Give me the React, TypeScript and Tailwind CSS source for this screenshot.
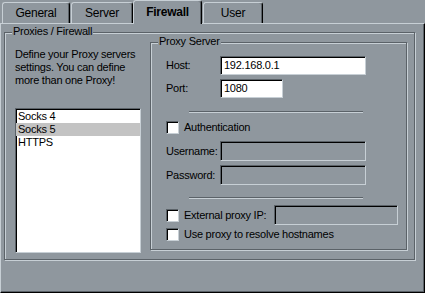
import React from 'react';

const sunken =
  'border border-t-[#5b6268] border-l-[#5b6268] border-b-[#c7cfd5] border-r-[#c7cfd5] shadow-[inset_1px_1px_0_#000]';
const etched = 'border border-[#5b6268] shadow-[inset_1px_1px_0_#c7cfd5,1px_1px_0_#c7cfd5]';

function Tab({ label, active, className }: { label: string; active?: boolean; className?: string }) {
  if (active) {
    return (
      <div
        className={`relative z-10 -mb-px flex h-[24px] items-center justify-center rounded-t-[3px] border-t border-l border-r border-t-[#c7cfd5] border-l-[#c7cfd5] border-r-black bg-[#8f979e] pb-[2px] text-[12px] font-bold shadow-[inset_-1px_0_0_#5b6268] ${className ?? ''}`}
      >
        {label}
      </div>
    );
  }
  return (
    <div
      className={`flex h-[21px] items-center justify-center rounded-t-[3px] border-t border-l border-r border-t-[#c7cfd5] border-l-[#c7cfd5] border-r-black text-[12px] shadow-[inset_-1px_0_0_#5b6268] ${className ?? ''}`}
    >
      {label}
    </div>
  );
}

function Group({ label, className, children }: { label: string; className?: string; children: React.ReactNode }) {
  return (
    <div className={`relative ${etched} ${className ?? ''}`}>
      <span className="absolute -top-[8px] left-[7px] bg-[#8f979e] px-[1px] leading-[13px]">{label}</span>
      {children}
    </div>
  );
}

function Check({ label }: { label: string }) {
  return (
    <div className="flex h-[13px] items-center">
      <div className={`h-[13px] w-[13px] shrink-0 bg-white ${sunken}`} />
      <span className="ml-[5px] whitespace-nowrap leading-[13px]">{label}</span>
    </div>
  );
}

function Field({ value, disabled, w }: { value?: string; disabled?: boolean; w: string }) {
  return (
    <div className={`flex h-full items-center pl-[3px] ${w} ${disabled ? 'bg-[#8f979e]' : 'bg-white'} ${sunken}`}>
      {value}
    </div>
  );
}

function Separator() {
  return <div className="ml-[38px] h-[2px] w-[174px] border-t border-b border-t-[#5b6268] border-b-[#c7cfd5]" />;
}

export default function App() {
  const proxies = ['Socks 4', 'Socks 5', 'HTTPS'];
  return (
    <div className="flex h-[293px] w-[425px] flex-col bg-[#8f979e] font-['Liberation_Sans',Arial,sans-serif] text-[11px] tracking-[-0.25px] text-black">
      {/* Tabs */}
      <div className="flex h-[23px] items-end pl-[2px]">
        <Tab label="General" className="w-[68px]" />
        <Tab label="Server" className="ml-[1px] w-[62px]" />
        <Tab label="Firewall" active className="w-[69px]" />
        <Tab label="User" className="ml-[1px] w-[60px]" />
      </div>

      {/* Page */}
      <div className="flex-1 border-t border-l border-r border-b border-t-[#c7cfd5] border-l-[#c7cfd5] border-r-black border-b-black pt-[8px] pl-[3px] shadow-[inset_-1px_-1px_0_#5b6268]">
        <Group label="Proxies / Firewall" className="flex h-[228px] w-[411px] pt-[9px] pr-[7px] pl-[10px]">
          <div className="flex w-[126px] flex-col">
            <p className="mt-[6px] leading-[13px]">
              Define your Proxy servers settings. You can define more than one Proxy!
            </p>
            <div className={`mt-[21px] h-[145px] bg-white py-[1px] ${sunken}`}>
              {proxies.map((p) => (
                <div key={p} className={`h-[13px] pl-[2px] leading-[13px] ${p === 'Socks 5' ? 'bg-[#c3c3c3]' : ''}`}>
                  {p}
                </div>
              ))}
            </div>
          </div>

          <Group label="Proxy Server" className="ml-[9px] flex h-[208px] w-[257px] flex-col pl-[15px]">
            <div className="mt-[13px] flex h-[19px] items-center">
              <span className="w-[54px]">Host:</span>
              <Field value="192.168.0.1" w="w-[146px]" />
            </div>
            <div className="mt-[4px] flex h-[19px] items-center">
              <span className="w-[54px]">Port:</span>
              <Field value="1080" w="w-[63px]" />
            </div>
            <div className="-ml-[15px] mt-[13px]">
              <Separator />
            </div>
            <div className="mt-[8px]">
              <Check label="Authentication" />
            </div>
            <div className="mt-[7px] flex h-[20px] items-center">
              <span className="w-[54px]">Username:</span>
              <Field disabled w="w-[146px]" />
            </div>
            <div className="mt-[4px] flex h-[20px] items-center">
              <span className="w-[54px]">Password:</span>
              <Field disabled w="w-[146px]" />
            </div>
            <div className="-ml-[15px] mt-[12px]">
              <Separator />
            </div>
            <div className="mt-[6px] flex h-[20px] items-center">
              <div className="w-[108px]">
                <Check label="External proxy IP:" />
              </div>
              <Field disabled w="w-[124px]" />
            </div>
            <div className="mt-[3px]">
              <Check label="Use proxy to resolve hostnames" />
            </div>
          </Group>
        </Group>
      </div>
    </div>
  );
}
